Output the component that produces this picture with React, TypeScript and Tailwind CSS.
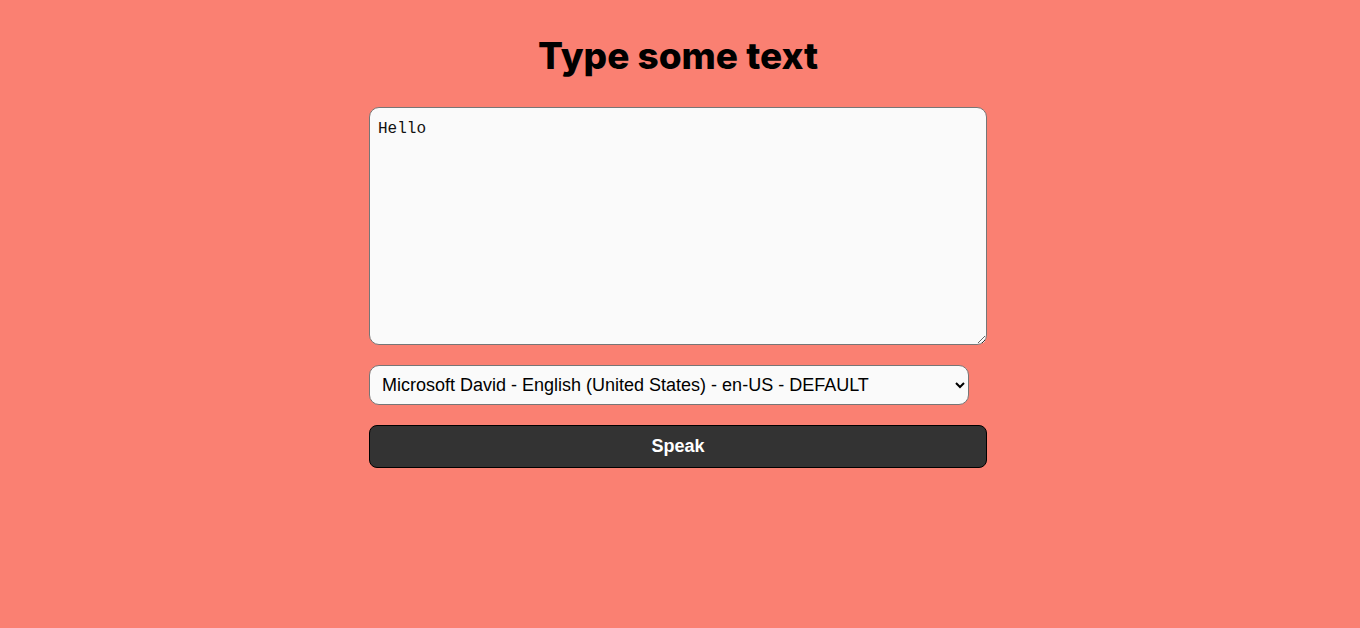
import { useState } from "react"

const voices = ["Microsoft David - English (United States) - en-US - DEFAULT"]

export default function App() {
  const [text, setText] = useState("Hello")
  const [voice, setVoice] = useState(voices[0])

  return (
    <div className="min-h-screen w-full bg-[#fa8072] flex flex-col items-center pt-[29px] pr-1">
      <h1 className="text-[37px] leading-[54px] font-extrabold text-black [font-family:Inter,'Noto_Sans',sans-serif]">
        Type some text
      </h1>
      <div className="w-[618px] mt-6 flex flex-col gap-5">
        <textarea
          value={text}
          onChange={(e) => setText(e.target.value)}
          className="h-[238px] w-full resize-y rounded-[10px] border border-[#767676] bg-[#fafafa] px-2 pt-[12px] pb-2 text-[16px] leading-[19px] text-[#111] [font-family:'Liberation_Mono',monospace] outline-none"
        />
        <select
          value={voice}
          onChange={(e) => setVoice(e.target.value)}
          className="h-10 w-[600px] rounded-[10px] border border-[#767676] bg-[#fafafa] pl-2 pr-2 text-[18px] text-black [font-family:'Liberation_Sans',Arial,sans-serif] appearance-auto"
        >
          {voices.map((v) => (
            <option key={v}>{v}</option>
          ))}
        </select>
        <button className="h-[43px] w-full rounded-lg border border-black bg-[#333] text-[18px] font-bold text-white [font-family:'Liberation_Sans',Arial,sans-serif]">
          Speak
        </button>
      </div>
    </div>
  )
}
